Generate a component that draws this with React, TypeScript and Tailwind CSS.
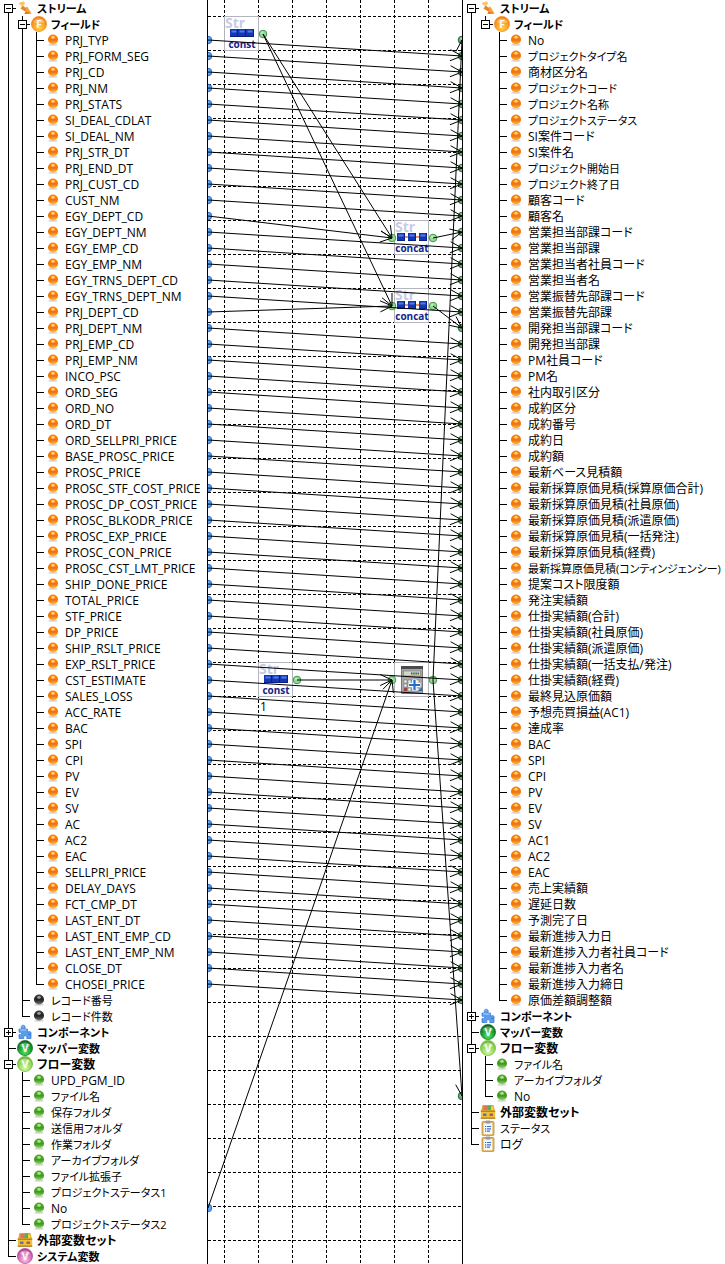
import { useId } from 'react';

type IconKind =
  | 'stream'
  | 'field'
  | 'orange'
  | 'black'
  | 'green'
  | 'component'
  | 'mapper'
  | 'flow'
  | 'external'
  | 'system'
  | 'clipboard';

type TreeNode = {
  label: string;
  icon: IconKind;
  bold?: boolean;
  toggle?: 'open' | 'closed';
  children?: TreeNode[];
};

const leaves = (icon: IconKind, labels: string[]): TreeNode[] =>
  labels.map((label) => ({ label, icon }));

const sourceFields = [
  'PRJ_TYP', 'PRJ_FORM_SEG', 'PRJ_CD', 'PRJ_NM', 'PRJ_STATS', 'SI_DEAL_CDLAT', 'SI_DEAL_NM',
  'PRJ_STR_DT', 'PRJ_END_DT', 'PRJ_CUST_CD', 'CUST_NM', 'EGY_DEPT_CD', 'EGY_DEPT_NM',
  'EGY_EMP_CD', 'EGY_EMP_NM', 'EGY_TRNS_DEPT_CD', 'EGY_TRNS_DEPT_NM', 'PRJ_DEPT_CD',
  'PRJ_DEPT_NM', 'PRJ_EMP_CD', 'PRJ_EMP_NM', 'INCO_PSC', 'ORD_SEG', 'ORD_NO', 'ORD_DT',
  'ORD_SELLPRI_PRICE', 'BASE_PROSC_PRICE', 'PROSC_PRICE', 'PROSC_STF_COST_PRICE',
  'PROSC_DP_COST_PRICE', 'PROSC_BLKODR_PRICE', 'PROSC_EXP_PRICE', 'PROSC_CON_PRICE',
  'PROSC_CST_LMT_PRICE', 'SHIP_DONE_PRICE', 'TOTAL_PRICE', 'STF_PRICE', 'DP_PRICE',
  'SHIP_RSLT_PRICE', 'EXP_RSLT_PRICE', 'CST_ESTIMATE', 'SALES_LOSS', 'ACC_RATE', 'BAC', 'SPI',
  'CPI', 'PV', 'EV', 'SV', 'AC', 'AC2', 'EAC', 'SELLPRI_PRICE', 'DELAY_DAYS', 'FCT_CMP_DT',
  'LAST_ENT_DT', 'LAST_ENT_EMP_CD', 'LAST_ENT_EMP_NM', 'CLOSE_DT', 'CHOSEI_PRICE',
];

const targetFields = [
  'No', 'プロジェクトタイプ名', '商材区分名', 'プロジェクトコード', 'プロジェクト名称',
  'プロジェクトステータス', 'SI案件コード', 'SI案件名', 'プロジェクト開始日', 'プロジェクト終了日',
  '顧客コード', '顧客名', '営業担当部課コード', '営業担当部課', '営業担当者社員コード',
  '営業担当者名', '営業振替先部課コード', '営業振替先部課', '開発担当部課コード', '開発担当部課',
  'PM社員コード', 'PM名', '社内取引区分', '成約区分', '成約番号', '成約日', '成約額',
  '最新ベース見積額', '最新採算原価見積(採算原価合計)', '最新採算原価見積(社員原価)',
  '最新採算原価見積(派遣原価)', '最新採算原価見積(一括発注)', '最新採算原価見積(経費)',
  '最新採算原価見積(コンティンジェンシー)', '提案コスト限度額', '発注実績額', '仕掛実績額(合計)',
  '仕掛実績額(社員原価)', '仕掛実績額(派遣原価)', '仕掛実績額(一括支払/発注)',
  '仕掛実績額(経費)', '最終見込原価額', '予想売買損益(AC1)', '達成率', 'BAC', 'SPI', 'CPI', 'PV',
  'EV', 'SV', 'AC1', 'AC2', 'EAC', '売上実績額', '遅延日数', '予測完了日', '最新進捗入力日',
  '最新進捗入力者社員コード', '最新進捗入力者名', '最新進捗入力締日', '原価差額調整額',
];

const sourceTree: TreeNode[] = [
  {
    label: 'ストリーム', icon: 'stream', bold: true, toggle: 'open',
    children: [
      { label: 'フィールド', icon: 'field', bold: true, toggle: 'open', children: leaves('orange', sourceFields) },
      ...leaves('black', ['レコード番号', 'レコード件数']),
    ],
  },
  { label: 'コンポーネント', icon: 'component', bold: true, toggle: 'closed' },
  { label: 'マッパー変数', icon: 'mapper', bold: true },
  {
    label: 'フロー変数', icon: 'flow', bold: true, toggle: 'open',
    children: leaves('green', [
      'UPD_PGM_ID', 'ファイル名', '保存フォルダ', '送信用フォルダ', '作業フォルダ',
      'アーカイブフォルダ', 'ファイル拡張子', 'プロジェクトステータス1', 'No', 'プロジェクトステータス2',
    ]),
  },
  { label: '外部変数セット', icon: 'external', bold: true },
  { label: 'システム変数', icon: 'system', bold: true },
];

const targetTree: TreeNode[] = [
  {
    label: 'ストリーム', icon: 'stream', bold: true, toggle: 'open',
    children: [
      { label: 'フィールド', icon: 'field', bold: true, toggle: 'open', children: leaves('orange', targetFields) },
    ],
  },
  { label: 'コンポーネント', icon: 'component', bold: true, toggle: 'closed' },
  { label: 'マッパー変数', icon: 'mapper', bold: true },
  {
    label: 'フロー変数', icon: 'flow', bold: true, toggle: 'open',
    children: leaves('green', ['ファイル名', 'アーカイブフォルダ', 'No']),
  },
  { label: '外部変数セット', icon: 'external', bold: true },
  { label: 'ステータス', icon: 'clipboard' },
  { label: 'ログ', icon: 'clipboard' },
];

/* ---------- icons ---------- */

const ballColors = {
  orange: ['#ffe0b0', '#f98a12', '#f27200', '#ffc04a'],
  green: ['#c9efb0', '#55ad2c', '#3f9a1c', '#a5dd70'],
  black: ['#b8b8b8', '#3a3a3a', '#222222', '#777777'],
};

function Ball({ tone }: { tone: keyof typeof ballColors }) {
  const id = useId();
  const [shine, body, edge, glow] = ballColors[tone];
  return (
    <svg width="16" height="16" viewBox="0 0 16 16" aria-hidden="true">
      <defs>
        <linearGradient id={id} x1="0" y1="0" x2="0" y2="1">
          <stop offset="0" stopColor={body} />
          <stop offset="0.55" stopColor={edge} />
          <stop offset="1" stopColor={glow} />
        </linearGradient>
      </defs>
      <ellipse cx="8" cy="12.8" rx="4.6" ry="1" fill="#bbb" opacity="0.6" />
      <circle cx="8" cy="7.5" r="5" fill={`url(#${id})`} />
      <ellipse cx="8" cy="5.4" rx="1.8" ry="1.4" fill={shine} opacity="0.8" />
    </svg>
  );
}

function Badge({ colors, letter }: { colors: [string, string, string]; letter: 'F' | 'V' }) {
  const id = useId();
  return (
    <svg width="16" height="16" viewBox="0 0 16 16" aria-hidden="true">
      <defs>
        <radialGradient id={id} cx="0.5" cy="0.75" r="0.75">
          <stop offset="0" stopColor={colors[0]} />
          <stop offset="0.6" stopColor={colors[1]} />
          <stop offset="1" stopColor={colors[2]} />
        </radialGradient>
      </defs>
      <circle cx="8" cy="8" r="7.6" fill={`url(#${id})`} stroke={colors[2]} strokeWidth="0.6" />
      <path d="M2.4 6.2a5.8 5 0 0 1 11.2 0c-3 1.4-8 1.4-11.2 0z" fill="#fff" opacity="0.3" />
      <text
        x="8"
        y="12"
        fontSize="11"
        fontWeight="700"
        fill="#fff"
        opacity="0.9"
        textAnchor="middle"
        fontFamily="Open Sans, sans-serif"
      >
        {letter}
      </text>
    </svg>
  );
}

function NodeIcon({ kind }: { kind: IconKind }) {
  switch (kind) {
    case 'orange':
    case 'green':
    case 'black':
      return <Ball tone={kind} />;
    case 'field':
      return <Badge letter="F" colors={['#ffd24d', '#fb9a1c', '#f07c0a']} />;
    case 'mapper':
      return <Badge letter="V" colors={['#5fe06a', '#129a2a', '#0a5c18']} />;
    case 'flow':
      return <Badge letter="V" colors={['#d9f7b0', '#8ed650', '#62b42c']} />;
    case 'system':
      return <Badge letter="V" colors={['#f7c6e6', '#d668b4', '#a83a88']} />;
    case 'stream':
      return (
        <svg width="16" height="16" viewBox="0 0 16 16" aria-hidden="true">
          <path d="M1.5 3.2 6.6 1.4 8 3.6 6 5.6l2.6 1.9 1.6-1 4.4 6.9-7.3.4 1.6-2L3.6 8.4l1.8-2.5z" fill="#f6a23a" />
          <path d="M1.5 3.2 6.6 1.4 8 3.6 5.4 5.9z" fill="#fbc56e" />
          <path d="m8.9 11.8 5.7 1.6-7.3.4z" fill="#dd6a10" />
          <path d="m3.6 8.4 1.8-2.5 3.8 2.8-.3 3.1z" fill="#ee8420" />
        </svg>
      );
    case 'component':
      return (
        <svg width="16" height="16" viewBox="0 0 16 16" aria-hidden="true">
          <path
            d="M2 5h2.800C3.500 2.800 4.600 1.200 6.200 1.200S8.900 2.800 7.800 5H10.500v3.300c1.800-1.300 3.700-.6 3.700 1s-1.700 1.800-2.900 1H14v4.200H9.700c.5-1.700 0-2.700-1.400-2.700s-1.900 1-1.400 2.700H2v-4c1.500.4 2.500 0 2.500-1.100S3.500 8 2 8.400z"
            fill="#5a9df0"
            stroke="#2f74cf"
            strokeWidth="0.7"
          />
          <path d="M3 6h6.500M5.500 2.900c.2-.7.8-.8 1.200-.6" stroke="#b8d8ff" strokeWidth="0.9" fill="none" />
        </svg>
      );
    case 'external':
      return (
        <svg width="16" height="16" viewBox="0 0 16 16" aria-hidden="true">
          <path d="M2.5 1h11l1.500 6H1z" fill="#d8a640" />
          <path d="M3.5 2h4v4h-4z" fill="#e2705c" />
          <path d="M7.5 1.5H11V6H7.500z" fill="#58b04a" />
          <path d="M11 2.500h2.500V6H11z" fill="#f2d33c" />
          <path d="M.8 6.500h14.400v8H.8z" fill="#f0c23c" />
          <path d="M.8 6.500h14.400V8H.8z" fill="#b8862a" />
          <path d="M3 9.500h3.500V12H3z" fill="#5a76a4" />
          <path d="M9.500 9.500H13V12H9.500z" fill="#a8604a" />
          <path d="M.8 13.500h14.400v1.300H.8z" fill="#a87824" />
        </svg>
      );
    case 'clipboard':
      return (
        <svg width="16" height="16" viewBox="0 0 16 16" aria-hidden="true">
          <rect x="2" y="1.5" width="12" height="14" rx="1" fill="#e3b65a" stroke="#b88830" strokeWidth="0.7" />
          <path d="M3.6 3.200h8.800v11H3.600z" fill="#f2f8ff" />
          <rect x="5.5" y="0.5" width="5" height="3" rx="1" fill="#9a9a9a" />
          <path d="M5 6.500h1.200M5 8.800h1.200M5 11.100h1.200" stroke="#2c62b4" strokeWidth="1.2" />
          <path d="M7 6.500h4M7 8.800h4M7 11.100h3" stroke="#3a72c4" strokeWidth="1.2" />
        </svg>
      );
  }
}

/* ---------- tree ---------- */

function Guide({ on }: { on: boolean }) {
  return (
    <span className="flex w-3.5 shrink-0 self-stretch pl-1.5">
      {on && <span className="w-px bg-black" />}
    </span>
  );
}

function Connector({ up, down, toggle, label }: { up: boolean; down: boolean; toggle?: 'open' | 'closed'; label: string }) {
  const lines = (
    <svg width="14" height="16" viewBox="0 0 14 16" shapeRendering="crispEdges" aria-hidden="true" className="block">
      {up && <path d="M6 0h1v8h-1z" />}
      {down && <path d="M6 8h1v8h-1z" />}
      <path d="M6 8h8v1H6z" />
      {toggle && <path d="M2.5 4.5h8v8h-8z" fill="#fff" stroke="#000" />}
      {toggle && <path d="M4 8h5v1H4z" />}
      {toggle === 'closed' && <path d="M6 6h1v5H6z" />}
    </svg>
  );
  if (!toggle) return <span className="w-3.5 shrink-0">{lines}</span>;
  return (
    <button type="button" aria-label={label} aria-expanded={toggle === 'open'} className="w-3.5 shrink-0">
      {lines}
    </button>
  );
}

// Labels made mostly of katakana are set one step smaller so they stay compact.
function labelSize(label: string) {
  const kana = label.match(/[ァ-ヶー]/g);
  return kana && kana.length > 3 ? 'text-[11px]' : 'text-[12px]';
}

function Branch({ nodes, guides, root }: { nodes: TreeNode[]; guides: boolean[]; root?: boolean }) {
  return (
    <ul>
      {nodes.map((node, i) => {
        const last = i === nodes.length - 1;
        return (
          <li key={node.label}>
            <div className="flex h-4 items-center">
              {guides.map((on, g) => (
                <Guide key={g} on={on} />
              ))}
              <Connector up={!(root && i === 0)} down={!last} toggle={node.toggle} label={node.label} />
              <span className="flex w-[18px] shrink-0 justify-center">
                <NodeIcon kind={node.icon} />
              </span>
              <span className={`pt-0.5 pl-[3px] leading-4 whitespace-nowrap ${labelSize(node.label)} ${node.bold ? 'font-bold' : ''}`}>
                {node.label}
              </span>
            </div>
            {node.children && <Branch nodes={node.children} guides={[...guides, !last]} />}
          </li>
        );
      })}
    </ul>
  );
}

/* ---------- mapping canvas ---------- */

const WIDTH = 254;
const HEIGHT = 1264;
const CELL = 34;

type Link = [number, number, number, number];

const rowY = (row: number) => row * 16 + 8;

const viaFunction = [11, 17];
const sourceRows = sourceFields.map((_, i) => i + 2);
const targetRows = targetFields.map((_, i) => i + 2);

const links: Link[] = [
  ...sourceRows
    .filter((_, i) => !viaFunction.includes(i))
    .map((row): Link => [0, rowY(row), WIDTH, rowY(row + 1)]),
  [0, rowY(13), 184, 238],
  [0, rowY(19), 184, 306],
  [55, 34, 184, 238],
  [55, 34, 184, 306],
  [225, 238, WIDTH, rowY(14)],
  [225, 306, WIDTH, rowY(20)],
  [89, 680, 184, 680],
  [0, rowY(75), 184, 680],
  [225, 680, WIDTH, rowY(2)],
  [225, 680, WIDTH, rowY(68)],
];

function Arrow({ link: [x1, y1, x2, y2] }: { link: Link }) {
  const back = Math.atan2(y1 - y2, x1 - x2);
  const leg = (turn: number) =>
    `${(x2 + 13 * Math.cos(back + turn)).toFixed(1)} ${(y2 + 13 * Math.sin(back + turn)).toFixed(1)}`;
  return <path d={`M${x1} ${y1}L${x2} ${y2}M${leg(0.44)}L${x2} ${y2}L${leg(-0.44)}`} />;
}

function Port({ x, y, tone }: { x: number; y: number; tone: 'in' | 'out' | 'end' }) {
  const [fill, stroke] =
    tone === 'in' ? ['#5aa2f5', '#1d5fc4'] : tone === 'out' ? ['#8fdc93', '#3b8a45'] : ['#5fb26a', '#1f5a2c'];
  return (
    <g>
      <circle cx={x} cy={y} r="3.8" fill={fill} stroke={stroke} strokeWidth="0.9" />
      <circle cx={x - 0.8} cy={y - 1.3} r="1.3" fill="#fff" opacity="0.4" />
    </g>
  );
}

function StringBlock({ x, y, kind }: { x: number; y: number; kind: 'const' | 'concat' }) {
  const xs = kind === 'const' ? [6, 14, 22] : [3, 14, 25];
  return (
    <g transform={`translate(${x} ${y})`}>
      <rect x="0.5" y="0.5" width="34" height="34" fill="#fff" stroke="#b4b4bc" />
      <text x="1" y="12" fontSize="14" fontWeight="700" fill="#c6cbe6" fontFamily="Open Sans, sans-serif">Str</text>
      {kind === 'concat' && <path d="M6 17h24" stroke="#ee6a2c" strokeWidth="1.5" />}
      {xs.map((sx) => (
        <g key={sx}>
          <rect x={sx} y="13" width="8" height="8" fill="#1238b8" />
          <rect x={sx + 1.5} y="14.5" width="5" height="2" fill="#4f7ae4" />
          <rect x={sx} y="20" width="8" height="1" fill="#0a1f80" />
          <rect x={sx + 7} y="13" width="1" height="8" fill="#0a1f80" />
        </g>
      ))}
      <text x="18" y="32" fontSize="10" fontWeight="700" fill="#14248c" textAnchor="middle" fontFamily="Open Sans, sans-serif">
        {kind}
      </text>
    </g>
  );
}

function Calculator({ x, y }: { x: number; y: number }) {
  return (
    <g transform={`translate(${x} ${y})`}>
      <rect x="0.5" y="0.5" width="34" height="34" fill="#fff" stroke="#b4b4bc" />
      <rect x="7" y="4" width="22" height="28" rx="1" fill="#777" />
      <rect x="8" y="5" width="20" height="26" fill="#a9a9a9" />
      <rect x="7" y="4" width="22" height="3" fill="#4a4a4a" />
      <rect x="9.5" y="9" width="17" height="5" fill="#cfd9c6" stroke="#777" strokeWidth="0.6" />
      <path d="M17 11.500h8" stroke="#4c5a4c" strokeWidth="2" strokeDasharray="1.5 0.7" />
      {[18, 22, 26].map((ky) =>
        [10, 14, 18, 22].map((kx) => (
          <rect key={`${kx}-${ky}`} x={kx} y={ky} width="3" height="3" fill={kx === 10 && ky === 26 ? '#c43030' : '#f4f4f4'} stroke="#666" strokeWidth="0.5" />
        )),
      )}
      <path d="M20.500 17.500v11M14.500 23h12" stroke="#fff" strokeWidth="4.5" />
      <path d="M20.500 18v10M15 23h11" stroke="#1f6fd0" strokeWidth="2.2" />
      <path d="m24 29 4-4v4z" fill="#1f6fd0" />
    </g>
  );
}

function MappingCanvas() {
  const columns = Array.from({ length: 7 }, (_, i) => 16 + i * CELL);
  const rows = Array.from({ length: 37 }, (_, i) => 16 + i * CELL);
  return (
    <svg width={WIDTH} height={HEIGHT} viewBox={`0 0 ${WIDTH} ${HEIGHT}`} className="block" role="img" aria-label="マッピング">
      <g stroke="#000" strokeDasharray="3 2" shapeRendering="crispEdges">
        {columns.map((x) => (
          <path key={x} d={`M${x + 0.5} 0V${HEIGHT}`} />
        ))}
        {rows.map((y) => (
          <path key={y} d={`M0 ${y + 0.5}H${WIDTH}`} />
        ))}
      </g>
      <StringBlock x={16} y={16} kind="const" />
      <StringBlock x={186} y={220} kind="concat" />
      <StringBlock x={186} y={288} kind="concat" />
      <StringBlock x={50} y={662} kind="const" />
      <Calculator x={186} y={662} />
      <text x="52" y="711" fontSize="12" fontFamily="Open Sans, sans-serif">1</text>

      {[...sourceRows, 75].map((row) => (
        <Port key={row} x={0} y={rowY(row)} tone="in" />
      ))}
      {[...targetRows, 68].map((row) => (
        <Port key={row} x={WIDTH} y={rowY(row)} tone="end" />
      ))}
      {[[55, 34], [184, 238], [225, 238], [184, 306], [225, 306], [89, 680], [184, 680], [225, 680]].map(([x, y]) => (
        <Port key={`${x}-${y}`} x={x} y={y} tone="out" />
      ))}
      <g fill="none" stroke="#000" strokeWidth="1">
        {links.map((link) => (
          <Arrow key={link.join()} link={link} />
        ))}
      </g>
    </svg>
  );
}

export default function App() {
  return (
    <main className="flex w-full overflow-hidden bg-white font-['Open_Sans','Noto_Sans_CJK_JP',sans-serif] text-black [font-feature-settings:'palt']">
      <nav aria-label="入力" className="w-52 shrink-0 border-r border-black pl-0.5">
        <Branch nodes={sourceTree} guides={[]} root />
      </nav>
      <section className="shrink-0">
        <MappingCanvas />
      </section>
      <nav aria-label="出力" className="min-w-0 flex-1 border-l border-black pl-0.5">
        <Branch nodes={targetTree} guides={[]} root />
      </nav>
    </main>
  );
}
